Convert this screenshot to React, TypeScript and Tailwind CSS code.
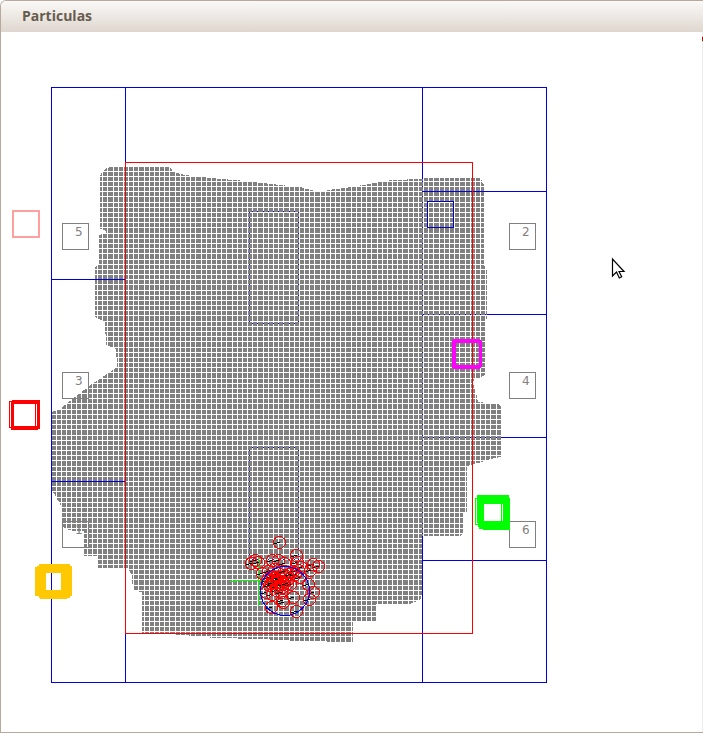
const gridX = Array.from({ length: 90 }, (_, i) => Math.floor(50.9 + i * 5.1765));
const gridY = Array.from({ length: 96 }, (_, i) => Math.floor(160.67 + i * 5.1765));

const region =
  '100,178 101,173 105,169 110,167 168,167 172,169 173,172 185,175 202,177 222,179 246,181 262,183 280,185 300,187 311,190 318,192 325,192 328,190 345,188 392,180 421,179 422,178 481,178 482,182 484,185 484,265 487,270 487,318 485,320 485,375 479,378 474,379 473,384 476,392 478,402 498,404 501,407 501,457 490,459 478,463 470,465 467,467 467,512 463,513 463,533 460,536 422,536 422,595 420,600 410,604 376,604 376,621 353,622 353,642 300,641 260,639 215,638 195,636 170,634 142,633 142,592 133,591 132,576 129,570 127,568 98,568 97,556 84,556 84,531 72,531 66,529 62,526 62,507 56,497 52,490 52,412 60,409 70,401 89,386 107,374 117,367 116,349 106,345 105,322 95,317 95,267 99,265 99,235 106,233 106,231 100,229';

const tags: [number, number, string][] = [
  [62, 223, '5'],
  [62, 372, '3'],
  [62, 521, '1'],
  [509, 223, '2'],
  [509, 372, '4'],
  [509, 521, '6'],
];

const particles: [number, number][] = [
  [279, 542], [296, 555], [255, 560], [251, 563], [258, 562], [272, 560], [278, 560], [284, 563],
  [313, 564], [318, 566], [310, 570], [262, 573], [268, 571], [297, 562], [301, 567], [293, 571],
  [270, 577], [274, 580], [278, 582], [281, 578], [284, 581], [288, 579], [276, 586], [271, 583],
  [282, 587], [286, 576], [267, 580], [278, 573], [274, 569], [290, 584], [266, 592], [272, 594],
  [276, 590], [281, 592], [293, 597], [283, 602], [282, 600], [271, 607], [296, 611], [308, 584],
  [313, 592], [309, 599], [300, 577], [295, 574], [280, 584], [272, 576], [298, 570], [284, 571],
  [273, 582], [277, 579], [279, 577], [275, 577], [269, 585], [283, 584], [290, 574], [287, 583],
];

const blueLines: [number, number, number, number][] = [
  [51, 87, 496, 1], [51, 682, 496, 1], [51, 87, 1, 596], [546, 87, 1, 596],
  [125, 87, 1, 596], [422, 87, 1, 92], [422, 536, 1, 147],
  [51, 279, 75, 1], [51, 481, 75, 1],
  [422, 191, 125, 1], [487, 314, 60, 1], [501, 437, 46, 1], [422, 560, 125, 1],
];

function Field() {
  return (
    <svg width="701" height="700" viewBox="1 32 701 700" shapeRendering="crispEdges" className="block">
      <polygon points={region} fill="#808080" />
      {gridX.map((x) => <rect key={x} x={x} y="160" width="1" height="485" fill="#fff" />)}
      {gridY.map((y) => <rect key={y} x="50" y={y} width="455" height="1" fill="#fff" />)}
      <g fill="#00f">
        {blueLines.map(([x, y, w, h], i) => <rect key={i} x={x} y={y} width={w} height={h} fill="#0000e6" />)}
        {gridY.filter((y) => y > 178 && y < 536).map((y) => <rect key={y} x="422" y={y} width="1" height="1" />)}
        {[[314, 487], [437, 501]].map(([y, right]) => (
          <g key={y}>
            {gridX.filter((x) => x >= 422 && x < right).map((x) => <rect key={x} x={x} y={y} width="1" height="1" />)}
          </g>
        ))}
        {[[211, 323], [447, 559]].map(([top, bottom]) => (
          <g key={top}>
            {gridY.filter((y) => y >= top && y <= bottom).map((y) => (
              <g key={y}>
                <rect x="249" y={y} width="1" height="1" />
                <rect x="298" y={y} width="1" height="1" />
              </g>
            ))}
            {gridX.filter((x) => x > 249 && x < 298).map((x) => (
              <g key={x}>
                <rect x={x} y={top} width="1" height="1" />
                <rect x={x} y={bottom} width="1" height="1" />
              </g>
            ))}
          </g>
        ))}
      </g>
      <rect x="427.5" y="201.5" width="26" height="26" fill="none" stroke="#0000c8" />
      {tags.map(([x, y, label]) => (
        <g key={label}>
          <rect x={x + 0.5} y={y + 0.5} width="26" height="26" fill="none" stroke="#808080" />
          <text x={x + 13} y={y + 13} fontSize="12" fontFamily="DejaVu Sans, sans-serif" fill="#808080">{label}</text>
        </g>
      ))}
      <rect x="125.5" y="162.5" width="347" height="471" fill="none" stroke="#f00" />
      <rect x="13" y="211" width="26" height="26" fill="none" stroke="#ffa0a0" strokeWidth="2" />
      <rect x="9.5" y="401.5" width="26" height="26" fill="none" stroke="#f00" />
      <path d="M12 400h28v29h-2v1h-27v-29h1zM14 404v22h23v-22z" fill="#f00" fillRule="evenodd" />
      <path d="M39 564h31v2h2v30h-2v2h-3v1h-27v-1h-1v-2h-4v-29h2v-1h2zM46 573v17h15v-17z" fill="#ffc800" fillRule="evenodd" />
      <path d="M453 339h27v1h1v1h1v26h-1v1h-1v1h-27v-1h-1v-28h1zM456 343v22h23v-22z" fill="#f0f" fillRule="evenodd" />
      <rect x="475.5" y="498.5" width="26" height="26" fill="none" stroke="#0f0" />
      <path d="M477 495h32v3h1v32h-27v-1h-4v-2h-1v-4h-1zM484 504v17h19v-17z" fill="#0f0" fillRule="evenodd" />
      <path d="M230 581.5h6M235 580.500h43M258.500 558v48" stroke="#0f0" fill="none" />
      {particles.map(([x, y], i) => (
        <g key={i}>
          <circle cx={x + 0.5} cy={y + 0.5} r="6" fill="none" stroke="#f00" />
          <path d={`M${x - 5} ${y + 1.5}L${x + 1} ${y + 0.5}`} stroke="#000" />
        </g>
      ))}
      <circle cx="275.500" cy="580.500" r="4" fill="none" stroke="#f00" strokeWidth="2" />
      <circle cx="285" cy="591" r="24.500" fill="none" stroke="#00f" />
      <path d="M612.500 259v17l4-4 2.800 6 2.400-1.200-2.700-5.300h5z" fill="#fff" stroke="#000" strokeWidth="1.200" shapeRendering="geometricPrecision" />
    </svg>
  );
}

export default function App() {
  return (
    <main className="h-[733px] w-[703px] overflow-hidden bg-white">
      <div className="flex h-full flex-col overflow-hidden rounded-tl-[6px] border-t border-b border-l border-[#b9a99c]">
        <header className="flex h-[31px] shrink-0 items-center bg-gradient-to-b from-[#faf9f7] to-[#dfd7cf] pb-[2px] pl-[21px]">
          <h1 className="font-['Open_Sans',sans-serif] text-[14px] font-bold text-[#675b50]">Particulas</h1>
        </header>
        <section className="flex min-h-0 flex-1">
          <Field />
          <aside className="flex w-px shrink-0 flex-col bg-[#ececec] pt-[4px]">
            <span className="h-px bg-[#f0c060]" />
            <span className="h-[4px] bg-[#8b1a1a]" />
            <span className="h-px bg-[#f0c060]" />
          </aside>
        </section>
      </div>
    </main>
  );
}
